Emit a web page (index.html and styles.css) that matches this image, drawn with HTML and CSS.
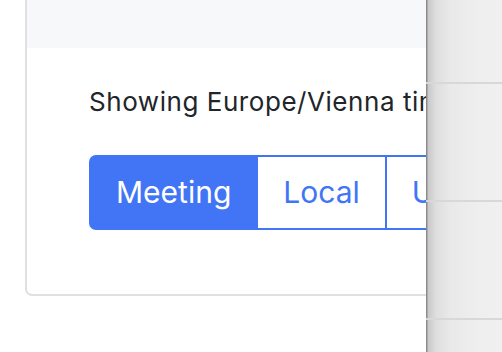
FILE: index.html
```html
<!DOCTYPE html>
<html lang="en">
<head>
<meta charset="utf-8">
<title>Timezone</title>
<link rel="stylesheet" href="styles.css">
</head>
<body>
<div class="page">
  <div class="card">
    <div class="card-header"></div>
    <div class="card-body">
      <p class="note">Showing Europe/Vienna time</p>
      <div class="btn-group">
        <button class="btn active">Meeting</button>
        <button class="btn">Local</button>
        <button class="btn">UTC</button>
      </div>
    </div>
  </div>
</div>
<aside class="side-panel">
  <div class="side-row first"></div>
  <div class="side-row"></div>
  <div class="side-row"></div>
</aside>
</body>
</html>
```

FILE: styles.css
```css
html, body {
  margin: 0;
  padding: 0;
  background: #ffffff;
  overflow: hidden;
}
body {
  font-family: Inter, "Noto Sans", "Liberation Sans", sans-serif;
  width: 502px;
  height: 352px;
}
.page {
  padding-left: 25px;
}
.card {
  border: 2px solid #e0e0e0;
  border-top: none;
  border-radius: 0 0 7px 7px;
  background: #fff;
  overflow: hidden;
}
.card-header {
  height: 48px;
  background: #f7f8fa;
}
.card-body {
  padding: 34px 0 64px 62px;
}
.note {
  margin: 0;
  font-size: 26px;
  line-height: 39px;
  letter-spacing: 0.55px;
  color: #212529;
  white-space: nowrap;
}
.btn-group {
  display: flex;
  margin-top: 34px;
}
.btn {
  font-family: inherit;
  font-size: 30px;
  line-height: 45px;
  padding: 13px 25px;
  border: 2px solid #4175f6;
  background: #fff;
  color: #4175f6;
  margin: 0 0 0 -2px;
  border-radius: 0;
  white-space: nowrap;
  flex: none;
}
.btn:first-child {
  margin-left: 0;
  border-radius: 7px 0 0 7px;
}
.btn.active {
  background: #4175f6;
  color: #fff;
}
.side-panel {
  position: fixed;
  top: 0;
  left: 426px;
  width: 76px;
  height: 352px;
  background: linear-gradient(to right, #8c8c8c 0, #8c8c8c 1px, #c9c9c9 2px, #dedede 10px, #e9e9e9 24px, #eeeeee 50px, #f0f0f0 76px);
  display: flex;
  flex-direction: column;
}
.side-row {
  height: 116px;
  border-bottom: 2px solid #d8d8d8;
  flex: none;
}
.side-row.first {
  height: 82px;
}
```
